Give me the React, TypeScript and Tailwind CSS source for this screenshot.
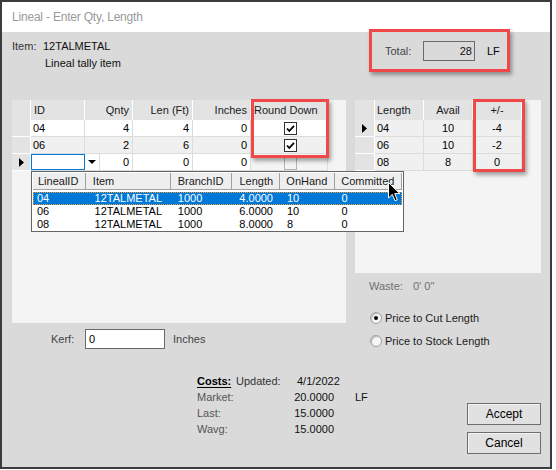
import React from 'react';

const LEFT_COLS = [
  { label: 'ID', w: 'w-[54px]', align: 'justify-start' },
  { label: 'Qnty', w: 'w-[48px]', align: 'justify-end' },
  { label: 'Len (Ft)', w: 'w-[60px]', align: 'justify-end' },
  { label: 'Inches', w: 'w-[58px]', align: 'justify-end' },
  { label: 'Round Down', w: 'w-[77px]', align: 'justify-start' },
];

const LEFT_ROWS = [
  { id: '04', qnty: '4', len: '4', inches: '0', bg: 'bg-white' },
  { id: '06', qnty: '2', len: '6', inches: '0', bg: 'bg-[#f0f0f0]' },
];

const RIGHT_ROWS = [
  { length: '04', avail: '10', diff: '-4', current: true },
  { length: '06', avail: '10', diff: '-2', current: false },
  { length: '08', avail: '8', diff: '0', current: false },
];

const LIST_COLS = [
  { label: 'LinealID', w: 'w-[53px]', pad: 'pl-[5px]', dpad: 'pl-[3px]' },
  { label: 'Item', w: 'w-[85px]', pad: 'pl-[7px]', dpad: 'pl-[8px]' },
  { label: 'BranchID', w: 'w-[62px]', pad: 'pl-[7px]', dpad: 'pl-[7px]' },
  { label: 'Length', w: 'w-[48px]', pad: 'pl-[7px]', dpad: 'pl-[7px]' },
  { label: 'OnHand', w: 'w-[55px]', pad: 'pl-[6px]', dpad: 'pl-[7px]' },
  { label: 'Committed', w: 'w-[67px]', pad: 'pl-[6px]', dpad: 'pl-[7px]' },
];

const LIST_ROWS = [
  ['04', '12TALMETAL', '1000', '4.0000', '10', '0'],
  ['06', '12TALMETAL', '1000', '6.0000', '10', '0'],
  ['08', '12TALMETAL', '1000', '8.0000', '8', '0'],
];

function RowArrow() {
  return (
    <svg width="5" height="9" viewBox="0 0 5 9" className="block">
      <path d="M0 0 L5 4.5 L0 9 Z" fill="#000" />
    </svg>
  );
}

function CheckBox({ checked, dim }: { checked?: boolean; dim?: boolean }) {
  return (
    <div
      className={
        dim
          ? 'h-[13px] w-[13px] border border-[#b4b4b4] bg-[#f4f4f4]'
          : 'flex h-[13px] w-[13px] items-center justify-center border border-[#333] bg-white'
      }
    >
      {checked && (
        <svg width="9" height="9" viewBox="0 0 9 9">
          <path d="M1 4.5 L3.3 7 L8 1.8" fill="none" stroke="#000" strokeWidth="1.8" />
        </svg>
      )}
    </div>
  );
}

function Radio({ checked, label }: { checked?: boolean; label: string }) {
  return (
    <div className="flex h-[14px] items-center">
      <div className="flex h-[12px] w-[12px] items-center justify-center rounded-full border border-[#a0a0a0] bg-[#f6f6f6] shadow-[inset_1px_1px_1px_rgba(0,0,0,0.25)]">
        {checked && <div className="h-[4px] w-[4px] rounded-full bg-black" />}
      </div>
      <span className="ml-[3px] text-[#1a1a1a]">{label}</span>
    </div>
  );
}

function RedBox({ className }: { className: string }) {
  return (
    <div
      className={
        'pointer-events-none absolute border-[3px] border-[#f04848] shadow-[2px_3px_4px_rgba(0,0,0,0.35)] ' + className
      }
    />
  );
}

function LeftGrid() {
  return (
    <div className="relative h-[223px] w-[334px] bg-[#f4f4f4]">
      <div className="flex h-[20px]">
        <div className="w-[19px] border-r border-white bg-[#e3e3e3]" />
        {LEFT_COLS.map((c) => (
          <div
            key={c.label}
            className={'flex items-center border-r border-white bg-[#e3e3e3] px-[3px] text-[#1a1a1a] ' + c.w + ' ' + c.align}
          >
            {c.label}
          </div>
        ))}
      </div>
      {LEFT_ROWS.map((r) => (
        <div key={r.id} className="flex h-[17px]">
          <div className="w-[19px] border-b border-r border-white bg-[#e3e3e3]" />
          <div className={'flex w-[54px] items-center border-b border-r border-[#dcdcdc] px-[2px] ' + r.bg}>{r.id}</div>
          <div className={'flex w-[48px] items-center justify-end border-b border-r border-[#dcdcdc] px-[3px] ' + r.bg}>{r.qnty}</div>
          <div className={'flex w-[60px] items-center justify-end border-b border-r border-[#dcdcdc] px-[3px] ' + r.bg}>{r.len}</div>
          <div className={'flex w-[58px] items-center justify-end border-b border-r border-[#dcdcdc] px-[3px] ' + r.bg}>{r.inches}</div>
          <div className={'flex w-[77px] items-center justify-center border-b border-r border-[#dcdcdc] pl-[2px] ' + r.bg}>
            <CheckBox checked />
          </div>
        </div>
      ))}
      {/* new row being edited */}
      <div className="flex h-[17px]">
        <div className="flex w-[19px] items-center justify-center border-b border-r border-white bg-[#e3e3e3]">
          <RowArrow />
        </div>
        <div className="flex w-[69px] border-b border-r border-[#dcdcdc] bg-white">
          <div className="h-full w-[55px] border border-[#0078d7] bg-white" />
          <div className="flex w-[14px] items-center justify-center bg-white">
            <svg width="8" height="4" viewBox="0 0 8 4">
              <path d="M0 0 L8 0 L4 4 Z" fill="#000" />
            </svg>
          </div>
        </div>
        <div className="flex w-[33px] items-center justify-end border-b border-r border-[#dcdcdc] bg-white px-[3px]">0</div>
        <div className="flex w-[60px] items-center justify-end border-b border-r border-[#dcdcdc] bg-white px-[3px]">0</div>
        <div className="flex w-[58px] items-center justify-end border-b border-r border-[#dcdcdc] bg-white px-[3px]">0</div>
        <div className="flex w-[77px] items-end justify-center border-b border-r border-[#dcdcdc] bg-[#f4f4f4] pl-[2px]">
          <CheckBox dim />
        </div>
      </div>

      {/* combo dropdown list */}
      <div className="absolute left-[19px] top-[71px] z-10 h-[61px] w-[373px] border border-[#646464] bg-white p-[1px]">
        <div className="flex h-[17px]">
          {LIST_COLS.map((c) => (
            <div
              key={c.label}
              className={'flex items-center border-b border-r border-[#a0a0a0] border-t-white bg-[#eeeeee] text-[#1a1a1a] ' + c.w + ' ' + c.pad}
            >
              {c.label}
            </div>
          ))}
        </div>
        <div className="mt-[2px]">
          {LIST_ROWS.map((row, i) => (
            <div
              key={row[0]}
              className={
                i === 0
                  ? 'flex h-[13px] items-center border border-dotted border-[#e8a040] bg-[#0078d7] leading-[11px] text-white'
                  : 'flex h-[13px] items-center border border-transparent leading-[11px] text-black'
              }
            >
              {row.map((cell, j) => (
                <div key={j} className={'whitespace-nowrap ' + LIST_COLS[j].w + ' ' + LIST_COLS[j].dpad}>
                  {cell}
                </div>
              ))}
            </div>
          ))}
        </div>
      </div>

      <RedBox className="left-[239px] top-[-1px] h-[59px] w-[78px]" />
    </div>
  );
}

function RightGrid() {
  return (
    <div className="relative h-[173px] w-[186px] bg-[#f4f4f4]">
      <div className="flex h-[20px]">
        <div className="w-[20px] border-r border-white bg-[#e3e3e3]" />
        <div className="flex w-[49px] items-center border-r border-white bg-[#e3e3e3] px-[2px] text-[#1a1a1a]">Length</div>
        <div className="flex w-[49px] items-center justify-center border-r border-white bg-[#e3e3e3] text-[#1a1a1a]">Avail</div>
        <div className="flex w-[49px] items-center justify-center border-r border-white bg-[#e3e3e3] text-[#1a1a1a]">+/-</div>
      </div>
      {RIGHT_ROWS.map((r) => (
        <div key={r.length} className="flex h-[17px]">
          <div className="flex w-[20px] items-center justify-center border-b border-r border-white bg-[#e3e3e3]">
            {r.current && <RowArrow />}
          </div>
          <div className="flex w-[49px] items-center border-b border-r border-[#dcdcdc] bg-[#f0f0f0] px-[2px]">{r.length}</div>
          <div className="flex w-[49px] items-center justify-center border-b border-r border-[#dcdcdc] bg-[#f0f0f0]">{r.avail}</div>
          <div className="flex w-[49px] items-center justify-center border-b border-r border-[#dcdcdc] bg-[#f0f0f0]">{r.diff}</div>
        </div>
      ))}
      <RedBox className="left-[118px] top-[-1px] h-[73px] w-[52px]" />
    </div>
  );
}

export default function App() {
  return (
    <div className="h-[470px] w-[556px] bg-white font-['Liberation_Sans',Arial,sans-serif] text-[11px] text-black">
      <div className="relative h-[469px] w-[552px] border-2 border-[#3c3c3c] bg-[#dadada]">
        {/* title bar */}
        <div className="flex h-[30px] items-center bg-white pl-[10px] text-[12px] tracking-[-0.2px] text-[#9a9a9a]">
          Lineal - Enter Qty, Length
        </div>

        <div className="pl-[10px] pr-[9px]">
          {/* item + total */}
          <div className="flex h-[68px] items-start">
            <div className="mt-[6px] w-[373px] leading-[17px] text-[#111]">
              <div className="flex">
                <span className="w-[31px] text-[#333]">Item:</span>
                <span>12TALMETAL</span>
              </div>
              <div className="pl-[33px]">Lineal tally item</div>
            </div>
            <div className="mt-[9px] flex h-[20px] items-center">
              <span className="w-[38px] text-[#444]">Total:</span>
              <div className="flex h-[20px] w-[52px] items-center justify-end border border-[#6a6a6a] bg-[#dadada] pr-[2px] text-[#111]">
                28
              </div>
              <span className="ml-[12px]">LF</span>
            </div>
          </div>

          {/* grids */}
          <div className="flex gap-[9px]">
            <div className="flex w-[334px] flex-col">
              <LeftGrid />
              <div className="mt-[6px] flex h-[20px] items-center">
                <span className="ml-[39px] w-[34px] text-[#444]">Kerf:</span>
                <div className="flex h-[20px] w-[80px] items-center border border-[#6a6a6a] bg-white pl-[3px]">0</div>
                <span className="ml-[8px] text-[#444]">Inches</span>
              </div>
            </div>
            <div className="flex w-[186px] flex-col">
              <RightGrid />
              <div className="mt-[6px] flex h-[14px] items-center text-[#707070]">
                <span className="ml-[14px] w-[44px]">Waste:</span>
                <span>0' 0"</span>
              </div>
              <div className="ml-[15px] mt-[18px] flex flex-col gap-[9px]">
                <Radio checked label="Price to Cut Length" />
                <Radio label="Price to Stock Length" />
              </div>
            </div>
          </div>

          {/* costs + buttons */}
          <div className="flex items-start">
            <div className="ml-[185px] mt-[24px] leading-[16px]">
              <div className="flex">
                <span className="w-[39px] font-bold underline underline-offset-[2px]">Costs:</span>
                <span className="w-[61px] text-[#333]">Updated:</span>
                <span className="text-[#111]">4/1/2022</span>
              </div>
              {[
                ['Market:', '20.0000', 'LF'],
                ['Last:', '15.0000', ''],
                ['Wavg:', '15.0000', ''],
              ].map(([label, value, unit]) => (
                <div key={label} className="flex">
                  <span className="w-[96px] text-[#555]">{label}</span>
                  <span className="w-[41px] text-right text-[#111]">{value}</span>
                  <span className="ml-[21px] text-[#111]">{unit}</span>
                </div>
              ))}
            </div>
            <div className="ml-auto mt-[54px] flex flex-col gap-[7px]">
              <button className="flex h-[22px] w-[74px] items-center justify-center border border-[#6e6e6e] bg-[#e1e1e1] text-[12px] text-black shadow-[inset_1px_1px_0_#f4f4f4]">
                Accept
              </button>
              <button className="flex h-[22px] w-[74px] items-center justify-center border border-[#6e6e6e] bg-[#e1e1e1] text-[12px] text-black shadow-[inset_1px_1px_0_#f4f4f4]">
                Cancel
              </button>
            </div>
          </div>
        </div>

        {/* annotation + cursor overlays */}
        <RedBox className="left-[367px] top-[27px] h-[43px] w-[141px]" />
        <svg className="absolute left-[386px] top-[180px] z-20" width="13" height="20" viewBox="0 0 13 20">
          <path d="M0.5 0.5 L0.5 16 L4.3 12.4 L7 18.8 L9.3 17.8 L6.7 11.6 L11.8 11.6 Z" fill="#000" stroke="#fff" strokeWidth="1" />
        </svg>
      </div>
    </div>
  );
}
